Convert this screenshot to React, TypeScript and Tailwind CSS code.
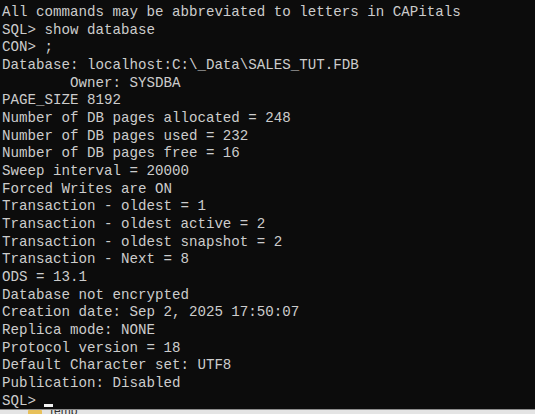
const lines = [
  'All commands may be abbreviated to letters in CAPitals',
  'SQL> show database',
  'CON> ;',
  'Database: localhost:C:\\_Data\\SALES_TUT.FDB',
  '        Owner: SYSDBA',
  'PAGE_SIZE 8192',
  'Number of DB pages allocated = 248',
  'Number of DB pages used = 232',
  'Number of DB pages free = 16',
  'Sweep interval = 20000',
  'Forced Writes are ON',
  'Transaction - oldest = 1',
  'Transaction - oldest active = 2',
  'Transaction - oldest snapshot = 2',
  'Transaction - Next = 8',
  'ODS = 13.1',
  'Database not encrypted',
  'Creation date: Sep 2, 2025 17:50:07',
  'Replica mode: NONE',
  'Protocol version = 18',
  'Default Character set: UTF8',
  'Publication: Disabled',
]

export default function App() {
  return (
    <div className="w-[535px] h-[414px] flex flex-col overflow-hidden bg-[#e4e4e4]">
      {/* console window */}
      <div className="h-[409px] bg-[#0c0c0c] pl-[2px] pt-[4px] text-[#cccccc] text-[14.17px] leading-[17.67px] font-['Liberation_Mono',monospace] whitespace-pre">
        {lines.map((line, i) => (
          <div key={i}>{line}</div>
        ))}
        <div>
          SQL&gt; <span className="inline-block w-[8.5px] h-[3px] bg-[#f2f2f2] align-[-2px]" />
        </div>
      </div>

      {/* explorer peeking out underneath */}
      <div className="h-px bg-[#8c8c8c]" />
      <div className="flex-1 flex items-start gap-[6px] pl-[28px] overflow-hidden">
        <div className="w-[14px] h-[10px] bg-[#e8c15a] rounded-[1px]" />
        <span className="text-[12px] leading-[12px] text-[#333] font-['Liberation_Sans',sans-serif] -mt-[5px]">Temp</span>
      </div>
    </div>
  )
}
